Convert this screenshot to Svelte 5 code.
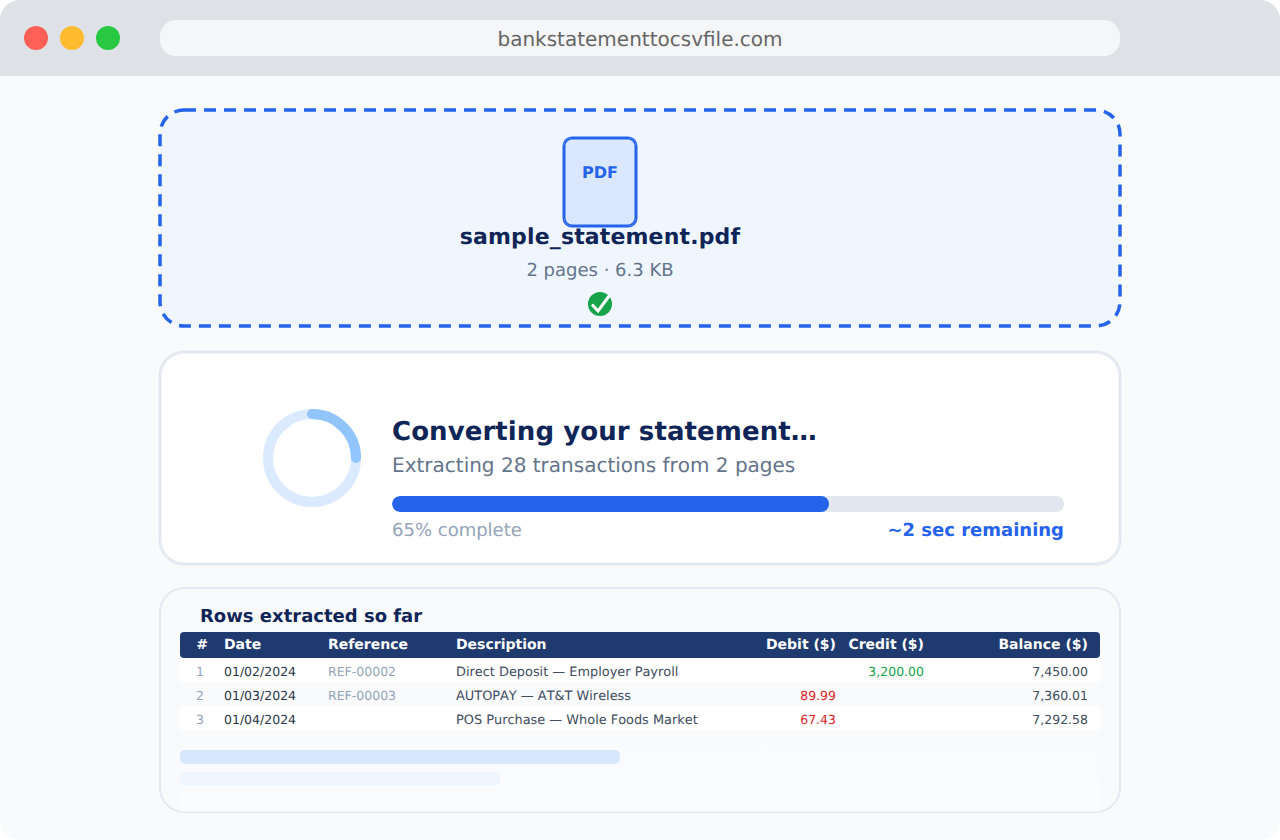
<script lang="ts">
	const columns = ['#', 'Date', 'Reference', 'Description', 'Debit ($)', 'Credit ($)', 'Balance ($)'];
	const rows = [
		{ n: 1, date: '01/02/2024', ref: 'REF-00002', desc: 'Direct Deposit — Employer Payroll', debit: '', credit: '3,200.00', balance: '7,450.00' },
		{ n: 2, date: '01/03/2024', ref: 'REF-00003', desc: 'AUTOPAY — AT&T Wireless', debit: '89.99', credit: '', balance: '7,360.01' },
		{ n: 3, date: '01/04/2024', ref: '', desc: 'POS Purchase — Whole Foods Market', debit: '67.43', credit: '', balance: '7,292.58' }
	];
	const progress = 65;
</script>

<div class="window">
	<header class="toolbar">
		<div class="dots">
			<span class="dot red"></span>
			<span class="dot yellow"></span>
			<span class="dot green"></span>
		</div>
		<div class="url">bankstatementtocsvfile.com</div>
	</header>

	<main class="page">
		<section class="drop">
			<svg class="dash" width="960" height="216" aria-hidden="true">
				<rect x="0" y="0" width="960" height="216" rx="24" fill="none" stroke="#2563eb" stroke-width="3.5" stroke-dasharray="12 8" />
			</svg>
			<div class="file-icon"><span>PDF</span></div>
			<div class="file-name">sample_statement.pdf</div>
			<div class="file-meta">2 pages · 6.3 KB</div>
			<svg class="ok" width="24" height="24" viewBox="0 0 24 24" aria-hidden="true">
				<circle cx="12" cy="12" r="12" fill="#16a34a" />
				<path d="M4 12.5L10 19L21.5 3.5" fill="none" stroke="#fff" stroke-width="3" />
			</svg>
		</section>

		<section class="status">
			<svg class="ring" width="98" height="98" viewBox="0 0 98 98" aria-hidden="true">
				<circle cx="49" cy="49" r="44" fill="none" stroke="#dbeafe" stroke-width="10" />
				<path d="M49 5A44 44 0 0 1 93 49" fill="none" stroke="#93c5fd" stroke-width="10" stroke-linecap="round" />
			</svg>
			<div class="status-body">
				<h1>Converting your statement…</h1>
				<p class="status-sub">Extracting 28 transactions from 2 pages</p>
				<div class="track"><div class="fill" style="width: {progress}%"></div></div>
				<div class="status-foot">
					<span class="pct">{progress}% complete</span>
					<span class="eta">~2 sec remaining</span>
				</div>
			</div>
		</section>

		<section class="rows">
			<h2>Rows extracted so far</h2>
			<div class="table">
				<div class="row head">
					{#each columns as col}
						<span>{col}</span>
					{/each}
				</div>
				{#each rows as row}
					<div class="row body">
						<span class="num">{row.n}</span>
						<span class="date">{row.date}</span>
						<span class="ref">{row.ref}</span>
						<span class="desc">{row.desc}</span>
						<span class="debit">{row.debit}</span>
						<span class="credit">{row.credit}</span>
						<span>{row.balance}</span>
					</div>
				{/each}
			</div>
			<div class="skeleton wide"></div>
			<div class="skeleton narrow"></div>
			<div class="fade"></div>
		</section>
	</main>
</div>

<style>
	:global(body) {
		margin: 0;
		background: #fff;
		font-family: 'DejaVu Sans', sans-serif;
		text-rendering: geometricPrecision;
		font-kerning: none;
	}

	.window {
		width: 1280px;
		height: 840px;
		border-radius: 20px;
		overflow: hidden;
		background: #f8fafc;
	}

	.toolbar {
		height: 76px;
		background: #dee1e6;
		display: flex;
		align-items: center;
		padding-left: 24px;
		box-sizing: border-box;
	}

	.dots {
		display: flex;
		gap: 12px;
		margin-right: 40px;
	}

	.dot {
		width: 24px;
		height: 24px;
		border-radius: 50%;
	}

	.red {
		background: #ff5f57;
	}

	.yellow {
		background: #febc2e;
	}

	.green {
		background: #28c840;
	}

	.url {
		width: 960px;
		height: 36px;
		border-radius: 16px;
		background: #f5f6f8;
		color: #666;
		font-size: 20px;
		line-height: 38px;
		text-align: center;
	}

	.page {
		padding: 34px 160px 0;
		display: flex;
		flex-direction: column;
	}

	.drop {
		position: relative;
		height: 216px;
		border-radius: 24px;
		background: #eff6ff;
		display: flex;
		flex-direction: column;
		align-items: center;
		box-sizing: border-box;
		padding: 28px 80px 0 0;
	}

	.dash {
		position: absolute;
		left: 0;
		top: 0;
		overflow: visible;
	}

	.file-icon {
		width: 72px;
		height: 88px;
		box-sizing: border-box;
		border-radius: 8px;
		box-shadow:
			0 0 0 1.5px #2563eb,
			inset 0 0 0 1.5px #2563eb;
		background: #dbe7fe;
		color: #2563eb;
		font-size: 16px;
		font-weight: 700;
		text-align: center;
		line-height: 20px;
		padding-top: 25px;
	}

	.file-name {
		font-size: 22px;
		font-weight: 700;
		line-height: 26px;
		letter-spacing: 0.15px;
		color: #0f2557;
		margin-top: -1px;
	}

	.file-meta {
		font-size: 18px;
		line-height: 20px;
		color: #64748b;
		margin-top: 10px;
	}

	.ok {
		margin-top: 11px;
		overflow: visible;
	}

	.status {
		height: 212px;
		margin-top: 26px;
		box-sizing: border-box;
		border-radius: 24px;
		box-shadow:
			0 0 0 1.5px #e2e8f0,
			inset 0 0 0 1.5px #e2e8f0;
		background: #fff;
		display: flex;
		padding: 0 56px 0 103px;
		align-items: flex-start;
	}

	.ring {
		flex: none;
		margin-top: 57px;
		margin-right: 31px;
	}

	.status-body {
		flex: 1;
		padding-top: 64px;
	}

	h1 {
		margin: 0;
		font-size: 26px;
		font-weight: 700;
		line-height: 32px;
		letter-spacing: 0.08px;
		color: #0f2557;
	}

	.status-sub {
		margin: 5px 0 0;
		font-size: 20px;
		line-height: 24px;
		color: #64748b;
	}

	.track {
		height: 16px;
		margin-top: 19px;
		border-radius: 8px;
		background: #e2e8f0;
		overflow: hidden;
	}

	.fill {
		height: 100%;
		border-radius: 8px;
		background: #2563eb;
	}

	.status-foot {
		display: flex;
		justify-content: space-between;
		font-size: 18px;
		line-height: 22px;
		margin-top: 8px;
	}

	.pct {
		color: #94a3b8;
	}

	.eta {
		color: #2563eb;
		font-weight: 700;
	}

	.rows {
		position: relative;
		height: 224px;
		margin-top: 24px;
		box-sizing: border-box;
		border-radius: 24px;
		box-shadow:
			0 0 0 1px #e2e8f0,
			inset 0 0 0 1px #e2e8f0;
		background: #f8fafc;
		padding: 0 20px;
	}

	h2 {
		margin: 0;
		padding: 18px 0 0 20px;
		font-size: 18px;
		font-weight: 700;
		line-height: 22px;
		color: #0f2557;
	}

	.table {
		margin-top: 4px;
	}

	.row {
		display: grid;
		grid-template-columns: 44px 104px 128px 300px 80px 88px 164px 12px;
		align-items: center;
	}

	.row span:nth-child(n + 5) {
		text-align: right;
	}

	.head {
		height: 26px;
		border-radius: 4px;
		background: #1e3a6e;
		color: #fff;
		font-size: 14px;
		font-weight: 700;
	}

	.head span:first-child {
		text-align: center;
	}

	.body {
		height: 24px;
		box-sizing: border-box;
		padding-top: 3px;
		background: #fff;
		color: #414c5e;
		font-size: 12.5px;
		line-height: 21px;
		align-items: baseline;
	}

	.body:nth-child(odd) {
		background: #f8fafc;
	}

	.num {
		text-align: center;
		color: #94a3b8;
		padding-right: 4px;
	}

	.date {
		color: #2a3648;
	}

	.ref {
		color: #94a3b8;
	}

	.desc {
		font-size: 12.9px;
	}

	.debit {
		color: #dc2626;
	}

	.credit {
		color: #16a34a;
	}

	.skeleton {
		height: 14px;
		border-radius: 5px;
	}

	.wide {
		width: 440px;
		margin-top: 20px;
		background: #cfe3fd;
	}

	.narrow {
		width: 320px;
		margin-top: 8px;
		background: #e9f2fe;
	}

	.fade {
		position: absolute;
		left: 20px;
		right: 20px;
		bottom: 0;
		height: 82px;
		background: linear-gradient(to bottom, rgba(255, 255, 255, 0), rgba(255, 255, 255, 0.5));
		pointer-events: none;
	}
</style>
